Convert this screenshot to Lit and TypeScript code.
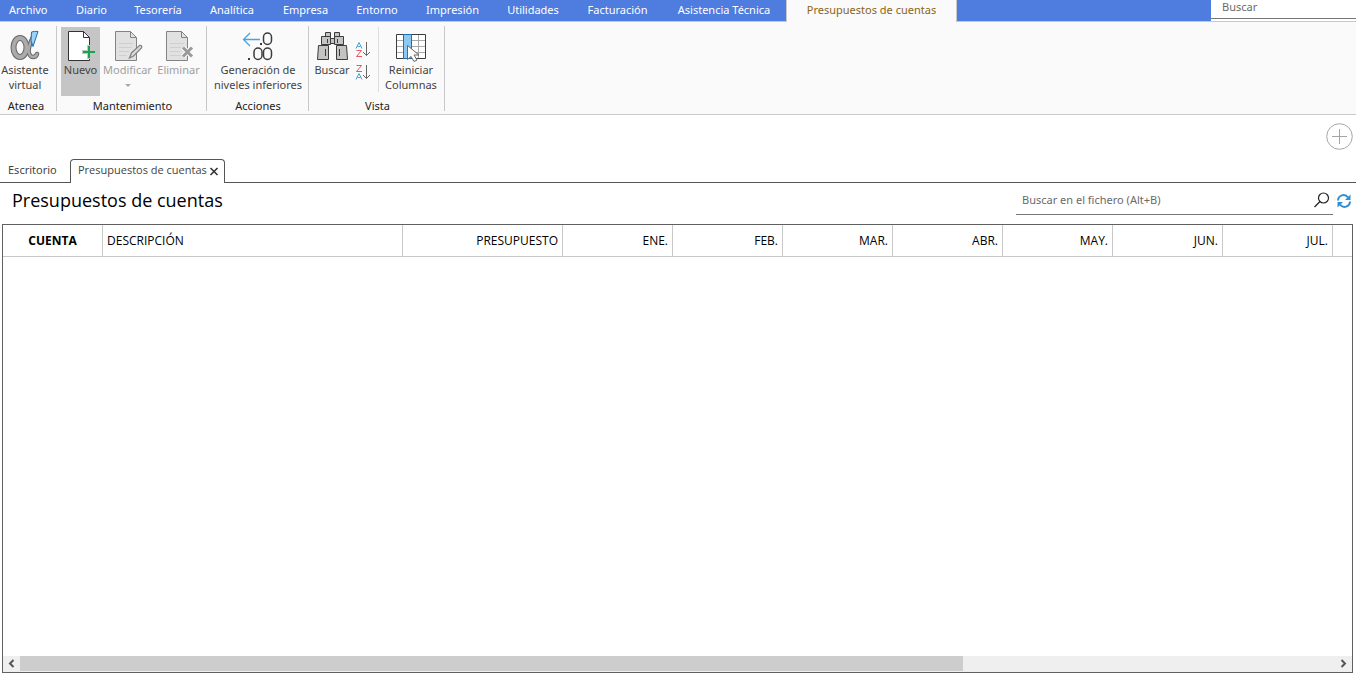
import { LitElement, html, css, svg } from "lit";
import { customElement } from "lit/decorators.js";

const MENU = ["Archivo", "Diario", "Tesorería", "Analítica", "Empresa", "Entorno", "Impresión", "Utilidades", "Facturación", "Asistencia Técnica"];
const MONTHS = ["ENE.", "FEB.", "MAR.", "ABR.", "MAY.", "JUN.", "JUL."];

const page = svg`<path d="M3.500 1.500h15l6 6v23h-21z"/><path d="M18.500 1.500v6h6" fill="none"/>`;

const icons = {
  assistant: html`<svg width="32" height="32" viewBox="0 0 32 32" aria-hidden="true">
    <g fill="none" stroke-linecap="round"><g stroke="#666"><ellipse cx="11" cy="17.500" rx="6.500" ry="9.500" stroke-width="6"/><path d="M24 7q-4 8-4.500 14 1 6 4.500 6 3 0 4-3" stroke-width="4.500"/></g>
    <g stroke="#ababab"><ellipse cx="11" cy="17.500" rx="6.500" ry="9.500" stroke-width="4"/><path d="M24 7q-4 8-4.500 14 1 6 4.500 6 3 0 4-3" stroke-width="2.500"/></g></g>
    <path d="M22.500 2q3-1 6.500-.5l-5 15-2-6z" fill="#9fd0f5" stroke="#1c6fb0"/></svg>`,
  add: html`<svg width="31" height="32" viewBox="0 0 31 32" aria-hidden="true"><g fill="#fff" stroke="#333">${page}</g>
    <path d="M17 22h14M24 15v14" stroke="#c5c5c5" stroke-width="4"/><path d="M18 22h12M24 16v12" stroke="#16a54a" stroke-width="2"/></svg>`,
  edit: html`<svg width="31" height="32" viewBox="0 0 31 32" aria-hidden="true"><g fill="#e1e1e1" stroke="#838383">${page}</g>
    <path d="M7 13.500h14M7 17.500h13M7 21.500h10M7 25.500h8" stroke="#cfcfcf"/>
    <path d="M17.500 28l2-5 8-7.500q3-.5 2 2.500l-8 8z" fill="#ddd" stroke="#838383" stroke-width="1.300"/></svg>`,
  remove: html`<svg width="31" height="32" viewBox="0 0 31 32" aria-hidden="true"><g fill="#e1e1e1" stroke="#838383">${page}</g>
    <path d="M7 13.500h14M7 17.500h11M7 21.500h10M7 25.500h11" stroke="#cfcfcf"/>
    <path d="M20 17.500l9 9M29 17.500l-9 9" stroke="#fafafa" stroke-width="5"/><path d="M20 17.500l9 9M29 17.500l-9 9" stroke="#999" stroke-width="3"/></svg>`,
  levels: html`<svg width="32" height="32" viewBox="0 0 32 32" aria-hidden="true">
    <path d="M18 9.500H2M8 3L1.500 9.500 8 16" fill="none" stroke="#4ba3d9" stroke-width="1.300"/>
    <g fill="none" stroke="#3c3c3c" stroke-width="1.500"><rect x="21.500" y="3" width="8" height="11.500" rx="4"/><rect x="12" y="18" width="8" height="11.500" rx="4"/><rect x="21.500" y="18" width="8" height="11.500" rx="4"/></g>
    <path d="M18 13h2v2h-2zM6 28h2v2H6z" fill="#3c3c3c"/></svg>`,
  find: html`<svg width="32" height="32" viewBox="0 0 32 32" aria-hidden="true"><g fill="#c4c4c2" stroke="#3c3c3c">
    <path d="M9.500 2.500h5v4h-5zM18.500 2.500h5v4h-5zM5.500 6.500h9v8h-9zM18.500 6.500h9v8h-9zM14.500 8.500h4v5h-4zM2.500 15.500h10v14h-11zM20.500 15.500h10l1 14h-11z"/></g>
    <path d="M9.500 19v7M23.500 19v7M11.500 9v4M21.500 9v4" stroke="#3c3c3c"/></svg>`,
  columns: html`<svg width="32" height="32" viewBox="0 0 32 32" aria-hidden="true"><path d="M1.500 4.500h29v24h-29z" fill="#fff"/>
    <path d="M2 10.500h28M2 16.500h28M2 22.500h28M23.500 5v23" stroke="#aaa"/><path d="M1.500 4.500h29v24h-29z" fill="none" stroke="#3c3c3c"/>
    <path d="M8.500 4.500h8v24h-8z" fill="#8cc8f2" stroke="#1c6fb0"/>
    <path d="M12.500 15.500v14l3.500-3 3 5 3-1.500-3-5h5z" fill="#fff" stroke="#666"/></svg>`,
};

const BLUE = "#4ba3d9";
const RED = "#e8595f";
const peak = (y: number) => svg`<path transform="translate(0 ${y})" d="M1 6.500L4 .5l3 6M2.500 4.500h3" stroke=${BLUE}/>`;
const zig = (y: number) => svg`<path transform="translate(0 ${y})" d="M1.500 .5h5l-5 6h5.500" stroke=${RED}/>`;
const sortIcon = (down: boolean) => html`<svg width="16" height="18" viewBox="0 0 16 18" aria-hidden="true"><g fill="none">
  ${down ? [peak(1), zig(9)] : [zig(1), peak(9)]}
  <path d="M11.500 1v13.500M8 11l3.500 3.500 3.500-3.500" stroke="#666"/></g></svg>`;

@customElement("app-root")
export class AppRoot extends LitElement {
  static styles = css`
    :host { display: flex; flex-direction: column; min-height: 100vh; box-sizing: border-box; padding-bottom: 3px; background: #fff; color: #222; font-family: "Noto Sans", sans-serif; font-size: 11px; line-height: 15px; }
    * { box-sizing: border-box; }
    button, input { font: inherit; color: inherit; background: none; border: 0; padding: 0; margin: 0; border-radius: 0; }
    input::placeholder { color: #6a6a6a; opacity: 1; }
    svg { display: block; flex: none; }
    .topbar { display: flex; height: 21px; background: #4e7cdf; }
    .menu { display: grid; grid-template-columns: 62px 59px 74px 74px 73px 70px 81px 80px 89px 124px 171px; flex: 1; min-width: 0; }
    .menu a { padding-top: 2px; color: #fff; text-align: center; text-decoration: none; white-space: nowrap; line-height: 16px; }
    .menu a:first-child { padding-left: 9px; text-align: left; }
    .menu a.active { background: #fafafa; color: #8c6414; height: 22px; z-index: 1; border: solid #c8c8c8; border-width: 0 1px; }
    .global { width: 145px; height: 21px; background: #fff; }
    .global input { display: block; height: 19px; padding: 0 11px 5px; border-bottom: 1px solid #777; width: 100%; }
    .ribbon { display: flex; height: 94px; background: #fafafa; border-top: 1px solid #c8c8c8; border-bottom: 1px solid #c8c8c8; padding-top: 4px; }
    .group { display: flex; flex-direction: column; height: 85px; border-right: 1px solid #c8c8c8; }
    .tools { display: flex; height: 74px; flex: none; padding-top: 1px; justify-content: center; }
    .group h2 { margin: 0; font: inherit; text-align: center; line-height: 12px; }
    .tool { display: flex; flex-direction: column; align-items: center; height: 69px; color: #444; white-space: nowrap; }
    .tool svg { margin-top: 3px; }
    .tool.on { background: #c5c5c5; }
    .tool:disabled { color: #a0a0a0; }
    .atenea { width: 57px; }
    .atenea .tools { padding-right: 6px; }
    .atenea h2 { padding-right: 4px; }
    .maint { width: 150px; }
    .maint .tools { display: grid; grid-template-columns: 39px 55px 47px; padding-left: 4px; justify-content: start; }
    .maint h2, .vista h2 { padding-left: 2px; }
    .actions { width: 102px; padding-left: 1px; }
    .vista { width: 136px; }
    .vista .tools { display: grid; grid-template-columns: 46px 24px 64px; justify-content: start; }
    .sorts { display: flex; flex-direction: column; align-items: center; gap: 5px; height: 65px; padding-top: 14px; padding-right: 8px; border-right: 1px solid #ddd; }
    .caret { width: 0; border: 3px solid transparent; border-top-color: #aaa; margin-top: 7px; }
    .strip { display: flex; justify-content: flex-end; padding: 8px 3px 0 0; height: 44px; }
    .strip button { height: 28px; }
    .tabs { display: flex; height: 24px; padding-left: 8px; border-bottom: 1px solid #555; color: #444; }
    .tab { padding-top: 3px; width: 62px; }
    .tab.current { display: flex; justify-content: space-between; width: 155px; height: 24px; padding: 2px 5px 0 7px; background: #fff; border: 1px solid #555; border-bottom: 0; border-radius: 4px 4px 0 0; font-family: "Open Sans", sans-serif; white-space: nowrap; }
    .tab.current svg { margin-top: 3px; }
    .tab.current button { height: 15px; }
    .heading { display: flex; align-items: flex-start; justify-content: space-between; height: 41px; padding: 4px 4px 0 12px; }
    h1 { margin: 0; font-family: "Open Sans", sans-serif; font-size: 18px; font-weight: 400; line-height: 26px; color: #000; }
    .search { display: flex; gap: 3px; align-items: flex-start; }
    .field { display: flex; align-items: center; width: 317px; height: 28px; border-bottom: 1px solid #777; padding: 0 3px 2px 6px; }
    .field input { flex: 1; height: 24px; }
    .refresh { padding-top: 6px; }
    .grid { flex: 1; display: flex; flex-direction: column; margin: 0 3px 0 2px; border: 1px solid #606060; overflow: hidden; }
    table { border-collapse: separate; border-spacing: 0; table-layout: fixed; width: 100%; }
    th { height: 32px; padding: 0 4px; border-right: 1px solid #c8c8c8; border-bottom: 1px solid #c8c8c8; font-family: "Open Sans", sans-serif; font-size: 12px; font-weight: 400; text-align: right; color: #000; }
    th:first-child { text-align: center; font-weight: 700; }
    th:nth-child(2) { text-align: left; }
    th:last-child { border-right: 0; }
    .c1 { width: 100px; } .c2 { width: 300px; } .c3 { width: 160px; } .cm { width: 110px; }
    .body { flex: 1; }
    .scroll { display: flex; height: 16px; background: #efefef; }
    .scroll button { width: 17px; padding-bottom: 2px; display: grid; place-items: center; }
    .track { flex: 1; display: flex; }
    .thumb { width: 71.7%; height: 15px; background: #cdcdcd; }
  `;

  render() {
    return html`
      <header class="topbar">
        <nav class="menu">${MENU.map((m) => html`<a href="#">${m}</a>`)}<a class="active" href="#">Presupuestos de cuentas</a></nav>
        <div class="global"><input type="text" placeholder="Buscar" aria-label="Buscar" /></div>
      </header>
      <section class="ribbon">
        <div class="group atenea"><div class="tools"><button class="tool">${icons.assistant}<span>Asistente</span><span>virtual</span></button></div><h2>Atenea</h2></div>
        <div class="group maint"><div class="tools">
          <button class="tool on">${icons.add}<span>Nuevo</span></button>
          <button class="tool" disabled>${icons.edit}<span>Modificar</span><i class="caret"></i></button>
          <button class="tool" disabled>${icons.remove}<span>Eliminar</span></button></div><h2>Mantenimiento</h2></div>
        <div class="group actions"><div class="tools"><button class="tool">${icons.levels}<span>Generación de</span><span>niveles inferiores</span></button></div><h2>Acciones</h2></div>
        <div class="group vista"><div class="tools">
          <button class="tool">${icons.find}<span>Buscar</span></button>
          <div class="sorts"><button aria-label="Orden ascendente">${sortIcon(true)}</button><button aria-label="Orden descendente">${sortIcon(false)}</button></div>
          <button class="tool">${icons.columns}<span>Reiniciar</span><span>Columnas</span></button></div><h2>Vista</h2></div>
      </section>
      <div class="strip"><button aria-label="Añadir"><svg width="28" height="28" viewBox="0 0 28 28"><circle cx="14.500" cy="13.500" r="12.800" fill="none" stroke="#a5a5a5"/><path d="M7 13.500h15M14.500 6v15" stroke="#a5a5a5"/></svg></button></div>
      <div class="tabs"><span class="tab">Escritorio</span><span class="tab current"><span>Presupuestos de cuentas</span><button aria-label="Cerrar"><svg width="10" height="11" viewBox="0 0 10 11"><path d="M1.500 2l7 7M8.500 2l-7 7" stroke="#333" stroke-width="1.600"/></svg></button></span></div>
      <div class="heading"><h1>Presupuestos de cuentas</h1>
        <div class="search"><div class="field"><input type="text" placeholder="Buscar en el fichero (Alt+B)" aria-label="Buscar en el fichero" />
          <svg width="16" height="16" viewBox="0 0 16 16"><circle cx="9.500" cy="6" r="5" fill="none" stroke="#222" stroke-width="1.200"/><path d="M6 9.500L.5 15" stroke="#222" stroke-width="1.300"/></svg></div>
          <button class="refresh" aria-label="Actualizar"><svg width="16" height="16" viewBox="0 0 16 16"><path d="M2 7.500A5.500 5.500 0 0 1 12 4.500M14 8.500A5.500 5.500 0 0 1 4 11.500" fill="none" stroke="#2e8fd2" stroke-width="2"/><path d="M14.500 1.500v5.500H9zM1.500 14.500V9H7z" fill="#2e8fd2"/></svg></button></div></div>
      <main class="grid">
        <table><colgroup><col class="c1" /><col class="c2" /><col class="c3" />${MONTHS.map(() => html`<col class="cm" />`)}<col /></colgroup>
          <thead><tr><th>CUENTA</th><th>DESCRIPCIÓN</th><th>PRESUPUESTO</th>${MONTHS.map((m) => html`<th>${m}</th>`)}<th></th></tr></thead></table>
        <div class="body"></div>
        <div class="scroll"><button aria-label="Izquierda"><svg width="7" height="9" viewBox="0 0 7 9"><path d="M5.500 1L2 4.500 5.500 8" fill="none" stroke="#555" stroke-width="2"/></svg></button><div class="track"><div class="thumb"></div></div><button aria-label="Derecha"><svg width="7" height="9" viewBox="0 0 7 9"><path d="M1.500 1L5 4.500 1.500 8" fill="none" stroke="#555" stroke-width="2"/></svg></button></div>
      </main>`;
  }
}
